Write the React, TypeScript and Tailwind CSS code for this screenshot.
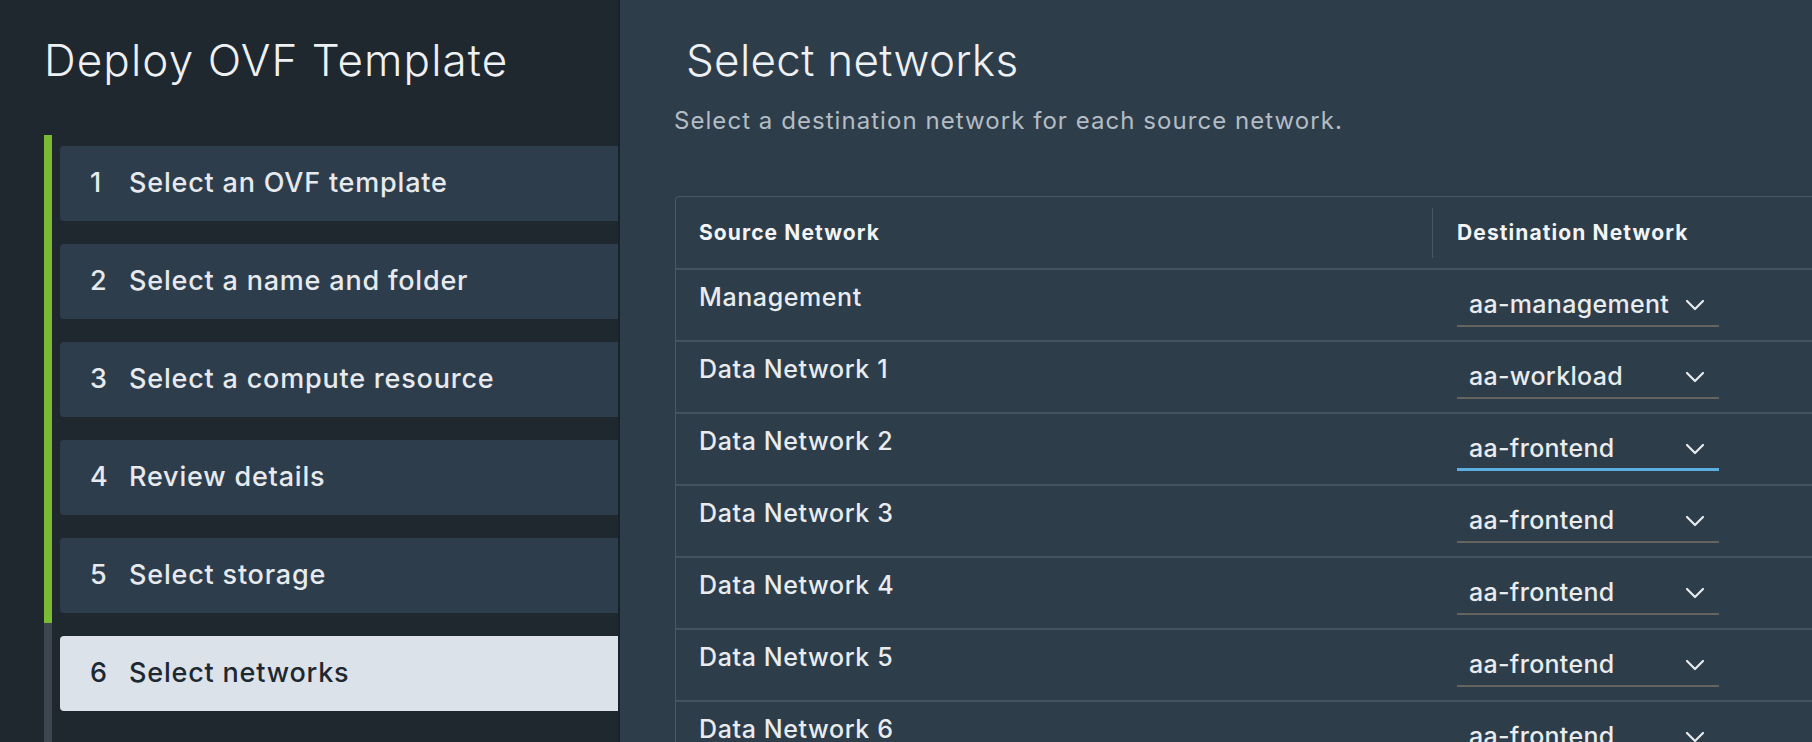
import { ChevronDown } from "lucide-react";

const FONT: React.CSSProperties = {
  fontFamily: "Inter, 'Open Sans', 'Liberation Sans', sans-serif",
};

const steps = [
  "Select an OVF template",
  "Select a name and folder",
  "Select a compute resource",
  "Review details",
  "Select storage",
  "Select networks",
];

const rows = [
  { source: "Management", dest: "aa-management" },
  { source: "Data Network 1", dest: "aa-workload" },
  { source: "Data Network 2", dest: "aa-frontend", focused: true },
  { source: "Data Network 3", dest: "aa-frontend" },
  { source: "Data Network 4", dest: "aa-frontend" },
  { source: "Data Network 5", dest: "aa-frontend" },
  { source: "Data Network 6", dest: "aa-frontend" },
];

export default function App() {
  return (
    <div className="flex h-[742px] w-[1812px] overflow-hidden bg-[#2e3d4a]" style={FONT}>
      {/* Left — wizard steps */}
      <aside className="flex w-[620px] shrink-0 flex-col border-r-2 border-[#19212a] bg-[#1f272f]">
        <h1 className="flex h-[120px] items-center pl-[44px] text-[44px] font-light tracking-[1.1px] text-[#eef1f3]">
          Deploy OVF Template
        </h1>

        <div className="mt-[15px] flex flex-1 pl-[44px]">
          {/* progress bar */}
          <div className="flex w-[8px] flex-col">
            <div className="h-[488px] bg-[#7bbb33]" />
            <div className="flex-1 bg-[#3d4650]" />
          </div>

          <ol className="flex flex-1 flex-col gap-[23px] pl-[8px] pt-[11px]">
            {steps.map((label, i) => {
              const active = i === steps.length - 1;
              return (
                <li
                  key={label}
                  className={
                    active
                      ? "flex h-[75px] items-center rounded-l-[4px] bg-[#dce2e9] text-[27px] font-medium tracking-[0.8px] text-[#1d2830]"
                      : "flex h-[75px] items-center rounded-l-[4px] bg-[#2e3d4b] text-[27px] font-medium tracking-[0.8px] text-[#e6eaee]"
                  }
                >
                  <span className="w-[69px] pl-[30px]">{i + 1}</span>
                  <span>{label}</span>
                </li>
              );
            })}
          </ol>
        </div>
      </aside>

      {/* Right — content */}
      <main className="flex-1 pl-[55px]">
        <h2 className="flex h-[120px] items-center pl-[11px] text-[44px] font-light tracking-[0.3px] text-[#eef1f3]">
          Select networks
        </h2>
        <p className="-mt-[15px] -ml-px text-[24px] leading-[32px] tracking-[1.05px] text-[#b3bcc4]">
          Select a destination network for each source network.
        </p>

        <div className="mt-[59px] w-[1300px] rounded-tl-[4px] border border-[#4a5865]">
          {/* header */}
          <div className="flex h-[73px] items-center border-b-2 border-[#46545f] text-[21px] font-bold tracking-[1.1px] text-[#f2f4f6]">
            <div className="w-[756px] pl-[23px]">Source Network</div>
            <div className="h-[50px] w-px bg-[#4a5865]" />
            <div className="pl-[24px]">Destination Network</div>
          </div>

          {rows.map((r) => (
            <div key={r.source} className="flex h-[72px] border-b-2 border-[#46545f]">
              <div className="w-[757px] pl-[23px] pt-[11px] text-[25px] font-medium leading-[32px] tracking-[0.6px] text-[#e8ecef]">
                {r.source}
              </div>
              <div className="pl-[24px] pt-[15px]">
                <div
                  className={
                    r.focused
                      ? "flex h-[42px] w-[262px] items-center justify-between border-b-[3px] border-[#5aaee0] pl-[12px] pr-[8px]"
                      : "flex h-[42px] w-[262px] items-center justify-between border-b-2 border-[#66625e] pl-[12px] pr-[8px]"
                  }
                >
                  <span className="text-[25px] font-medium tracking-[0.3px] text-[#e8ecef]">{r.dest}</span>
                  <ChevronDown size={32} strokeWidth={1.6} className="text-[#e8ecef]" />
                </div>
              </div>
            </div>
          ))}
        </div>
      </main>
    </div>
  );
}
